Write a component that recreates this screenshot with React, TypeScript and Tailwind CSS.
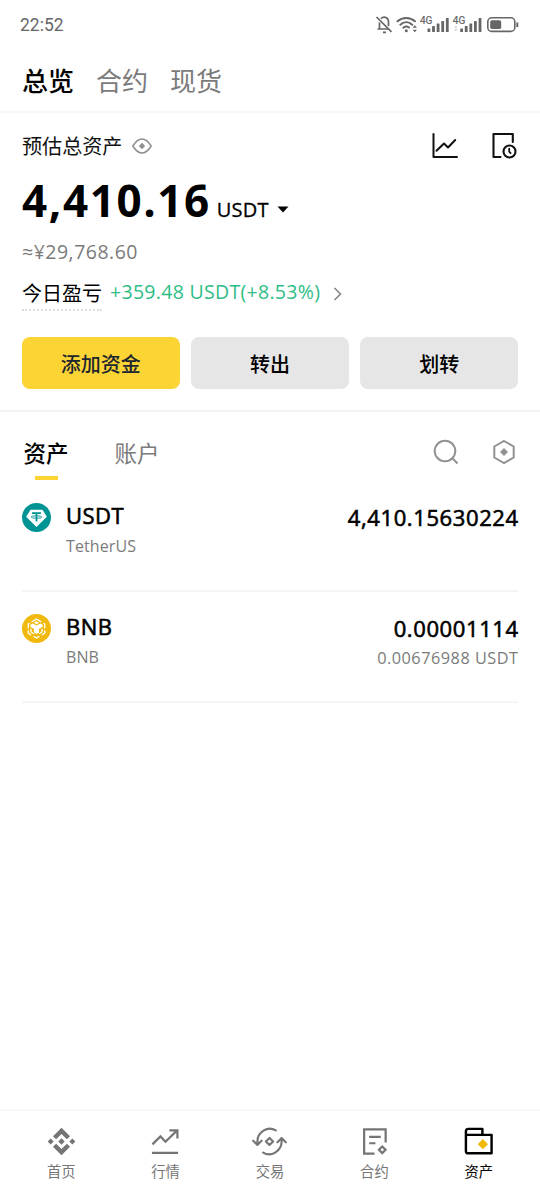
import type { ReactNode } from "react";

const latin = "font-['Open_Sans','Noto_Sans_CJK_SC',sans-serif]";
const han = "font-['Noto_Sans_CJK_SC',sans-serif]";

function Signal() {
  return (
    <g fill="#666" stroke="none">
      <rect x="0" y="10.5" width="2.8" height="3.5" rx=".6" />
      <rect x="4.6" y="8" width="2.8" height="6" rx=".6" />
      <rect x="9.2" y="5.5" width="2.8" height="8.500" rx=".6" />
      <rect x="13.8" y="3" width="2.8" height="11" rx=".6" />
      <rect x="18.4" y="0" width="2.8" height="14" rx=".6" />
    </g>
  );
}

function StatusBar() {
  return (
    <header className="flex h-[50px] items-center justify-between pl-5 text-[#666]">
      <span className="relative top-[1px] font-[Roboto,sans-serif] text-[17.5px] leading-none">22:52</span>
      <svg width="168" height="24" viewBox="372 12 168 24" fill="none" stroke="#666" strokeWidth="1.7">
        <path d="M376.500 16 391.500 30.800M377.500 28H388M379.500 28V21.5M381 17.800C383 15.300 388.300 15.300 388.500 21V25M383 31.400H386" />
        <g strokeLinecap="round" strokeWidth="2">
          <path d="M397.5 20.3C402.5 15.8 410 15.8 415 20.3M400.3 23.7C404 20.4 408.7 20.4 412.2 23.7M403.3 26.7C405.3 25.2 407 25.2 409 26.5" />
        </g>
        <circle cx="406.3" cy="29.8" r="1.5" fill="#666" stroke="none" />
        <path d="m414.800 24.200 2.200 2.500h-4.400zM414.800 31.300l-2.200-2.500h4.400z" fill="#666" stroke="none" />
        <text x="420" y="22.7" fontFamily="Roboto, sans-serif" fontSize="10" fill="#666" stroke="#666" strokeWidth=".2">4G</text>
        <text x="452.800" y="22.7" fontFamily="Roboto, sans-serif" fontSize="10" fill="#666" stroke="#666" strokeWidth=".2">4G</text>
        <g transform="translate(427.500 17)"><Signal /></g>
        <g transform="translate(460.200 17)"><Signal /></g>
        <path d="m455.8 24.7 1.6 2h-3.2zM455.8 30.2l-1.6-2h3.2z" fill="#ccc" stroke="none" />
        <rect x="487.8" y="16.800" width="27" height="13.6" rx="4" strokeWidth="1.6" />
        <rect x="490.2" y="19.2" width="11" height="8.8" rx="1.8" fill="#666" stroke="none" />
        <path d="M517.3 21.500v4.600" strokeWidth="2" />
      </svg>
    </header>
  );
}

function Overview() {
  return (
    <section className={`h-[299px] border-b-2 border-[#f3f3f3] px-[22px] ${latin}`}>
      <div className="flex h-[66px] items-center">
        <span className={`text-[20.100px] leading-none text-[#111] ${han}`}>预估总资产</span>
        <svg className="-mt-[1px] ml-[9.500px]" width="20" height="16" viewBox="0 0 20 16" fill="none" stroke="#909090" strokeWidth="1.5">
          <path d="M.8 8C3.3 4 6.5 1 10 1s6.700 3 9.200 7c-2.500 4-5.700 7-9.200 7S3.300 12 .8 8Z" />
          <path d="m10 4.800 3.200 3.200-3.200 3.200L6.800 8z" fill="#909090" stroke="none" />
        </svg>
        <svg className="mr-8 ml-auto" width="28" height="28" viewBox="0 0 28 28" fill="none" stroke="#111" strokeWidth="2" strokeLinecap="round" strokeLinejoin="round">
          <path d="M2.500 2V25H26M5.500 18.700l7.500-7.200 4 4L24.200 8" />
        </svg>
        <svg className="-mr-[1px]" width="28" height="28" viewBox="0 0 28 28" fill="none" stroke="#111" strokeWidth="2.100" strokeLinecap="round" strokeLinejoin="round">
          <path d="M9.500 25H2.500V2H21.800v8" />
          <circle cx="18.500" cy="19.500" r="6" />
          <path d="M18.200 16.700v3l1.400 1.400" strokeWidth="1.800" />
        </svg>
      </div>
      <div className="-mt-[2px] flex h-[50px] items-baseline text-black">
        <span className="text-[44px] leading-[47px] font-bold tracking-[1.600px]">4,410.16</span>
        <span className="ml-[6px] text-[20px] leading-none tracking-[0.200px] [-webkit-text-stroke:0.3px_black]">USDT</span>
        <svg className="relative -top-[4px] ml-[8px]" width="12" height="7" viewBox="0 0 12 7"><path d="M.5.500h11L6 6.500z" /></svg>
      </div>
      <div className="flex h-[50px] items-center text-[19.500px] leading-none tracking-[0.500px] text-[#7b7b7b]">≈¥29,768.60</div>
      <div className="flex h-[36px] items-start">
        <span className={`h-[34px] border-b-2 border-dotted border-[#dedede] text-[20px] leading-[32px] text-black ${han}`}>今日盈亏</span>
        <span className="ml-2 text-[19.500px] leading-[30px] tracking-[0.300px] text-[#2ebd85]">+359.48 USDT(+8.53%)</span>
        <svg className="mt-[9px] ml-[13px]" width="10" height="16" viewBox="0 0 10 16" fill="none" stroke="#8b8b8b" strokeWidth="1.700"><path d="m1.500 2 6 6-6 6" /></svg>
      </div>
      <div className={`mt-[23.500px] grid h-[52px] grid-cols-3 gap-[11.500px] text-[20px] leading-none font-medium ${han}`}>
        <button className="rounded-lg bg-[#fcd535] pt-[2px] text-[#202630]">添加资金</button>
        <button className="rounded-lg bg-[#e6e6e6] pt-[2px] text-black">转出</button>
        <button className="rounded-lg bg-[#e6e6e6] pt-[2px] text-black">划转</button>
      </div>
    </section>
  );
}

function AssetTabs() {
  return (
    <div className={`flex h-[69px] items-start pr-6 pl-[23.500px] pt-[27px] text-[22.500px] leading-[26px] ${han}`}>
      <div className="flex flex-col items-center gap-[11px]">
        <span className="font-medium text-black">资产</span>
        <span className="h-[4px] w-[23px] bg-[#fcd535]" />
      </div>
      <span className="ml-[46px] text-[#7b7b7b]">账户</span>
      <svg className="mt-[-1px] ml-auto" width="28" height="28" viewBox="0 0 28 28" fill="none" stroke="#929292" strokeWidth="2"><circle cx="13" cy="13" r="10.300" /><path d="m20.300 20.300 5.200 5.200" /></svg>
      <svg className="-mr-[2px] ml-[30px] mt-[-1px]" width="28" height="28" viewBox="0 0 28 28" fill="none" stroke="#929292" strokeWidth="2"><path d="m14 3 9.700 5.500v11L14 25l-9.700-5.500v-11z" /><path d="m14 10 4 4-4 4-4-4z" fill="#929292" stroke="none" /></svg>
    </div>
  );
}

function UsdtLogo() {
  return (
    <svg width="29" height="29" viewBox="0 0 29 29">
      <circle cx="14.500" cy="14.500" r="14.500" fill="#009393" />
      <path d="M8.500 6.700h12l4.300 7-10.300 10.300L4.200 13.700z" fill="white" />
      <path d="M10 10.200h9M14.500 10.500v8" stroke="#009393" strokeWidth="1.700" />
      <ellipse cx="14.500" cy="14" rx="5.300" ry="1.200" fill="none" stroke="#009393" strokeWidth=".9" />
    </svg>
  );
}

function BnbLogo() {
  return (
    <svg width="29" height="29" viewBox="0 0 29 29" fill="none">
      <circle cx="14.500" cy="14.500" r="14.500" fill="#f0b90b" />
      <g stroke="white" strokeWidth="1.300">
        <path d="m9.500 8 5-2.900 5 2.900M21.500 9.200l1.200.7v4.500M22.700 16.300v3l-3 1.700M17.500 22.200l-3 1.700-3-1.700M9.300 21l-3-1.700v-3M6.300 14.400V9.900l1.200-.7" />
        <path d="M9 14.800v3.200l3 1.800M20 14.800v3.200l-3 1.800" />
      </g>
      <path d="m8.300 10.800 2.400-1.400 3.800 2.200 3.800-2.200 2.400 1.400v1.900L17 14.900v3.700l-2.500 1.500-2.500-1.500v-3.700l-3.700-2.200z" fill="white" />
      <path d="m11.800 8.700 2.700-1.500 2.700 1.500-2.700 1.500z" fill="white" />
    </svg>
  );
}

type AssetProps = { logo: ReactNode; symbol: string; name: string; amount: string; value?: string };

function AssetRow({ logo, symbol, name, amount, value }: AssetProps) {
  return (
    <li className="flex h-[111px] items-start border-b-2 border-[#f5f5f5] pt-[22px]">
      {logo}
      <div className="-mt-[2px] ml-[15px] flex flex-col">
        <span className="text-[22px] leading-[28px] tracking-[0.500px] text-black [-webkit-text-stroke:0.6px_black]">{symbol}</span>
        <span className="mt-[3px] text-[16px] leading-[28px] tracking-[0.100px] text-[#7b7b7b]">{name}</span>
      </div>
      <div className="ml-auto flex flex-col items-end">
        <span className="-mr-[0.700px] text-[22px] leading-[28px] tracking-[0.600px] text-black [-webkit-text-stroke:0.6px_black]">{amount}</span>
        {value && <span className="-mr-[0.500px] mt-[2px] text-[16.300px] leading-[28px] tracking-[0.500px] text-[#7b7b7b]">{value}</span>}
      </div>
    </li>
  );
}

const navItems: { label: string; icon: ReactNode; active?: boolean }[] = [
  { label: "首页", icon: <g fill="currentColor"><path d="m16 1.700 8.800 8.800-3.300 3.300L16 8.300l-5.500 5.500-3.300-3.300zM16 30.300l-8.800-8.800 3.300-3.300 5.500 5.500 5.500-5.500 3.300 3.300z" /><path d="m16 12.700 3.300 3.300-3.300 3.300-3.300-3.300zM4.800 12.900 7.900 16l-3.100 3.100L1.700 16zM27.200 12.900l3.100 3.100-3.100 3.100-3.100-3.100z" /></g> },
  { label: "行情", icon: <g stroke="currentColor" strokeWidth="2.300" fill="none"><path d="m2.500 19 8.300-8.300 5.200 5.500L27.500 5M20 4.500h8.300V13M2 27.700h27" /></g> },
  { label: "交易", icon: <g stroke="currentColor" strokeWidth="2.200" fill="none" strokeLinecap="round" strokeLinejoin="round"><path d="M22.500 4.500C14-.5 3.500 6.500 3.500 16v3.300M-.8 15.200l4.300 4.300 4.300-4.300M9.500 27.500C18 32.500 28.500 25.500 28.500 16v-3.300M24.200 16.800l4.300-4.300 4.300 4.300M16 12.300l3.700 3.700-3.700 3.700-3.700-3.700z" /></g> },
  { label: "合约", icon: <g stroke="currentColor" strokeWidth="2.300" fill="none"><path d="M16 28.600H5.300V3.400H27.500V17M10.500 11.200h12M10.500 17.800h6.500" /><path d="m24 21.200 3.400 3.400-3.400 3.400-3.400-3.400z" /></g> },
  { label: "资产", active: true, icon: <g fill="none"><path d="M3 9.200V5.500q0-2.500 2.500-2.500h14.500v6M3 9.200h26.500v19H5.500Q3 28.200 3 25.700z" stroke="currentColor" strokeWidth="2.500" strokeLinejoin="round" /><path d="m20.500 13.500 5.300 5.300-5.300 5.300-5.300-5.300z" fill="#f0b90b" /></g> },
];

export default function App() {
  return (
    <main className="flex h-[1200px] w-[540px] flex-col overflow-hidden bg-white">
      <StatusBar />
      <nav className={`flex h-[63px] items-center gap-[22px] border-b-2 border-[#f6f6f6] px-[22px] pb-[2px] text-[26px] leading-none text-[#7b7b7b] ${han}`}>
        <span className="font-medium text-black">总览</span>
        <span>合约</span>
        <span>现货</span>
      </nav>
      <Overview />
      <AssetTabs />
      <ul className={`flex-1 px-[22px] ${latin}`}>
        <AssetRow logo={<UsdtLogo />} symbol="USDT" name="TetherUS" amount="4,410.15630224" />
        <AssetRow logo={<BnbLogo />} symbol="BNB" name="BNB" amount="0.00001114" value="0.00676988 USDT" />
      </ul>
      <footer className={`grid h-[91px] grid-cols-5 border-t-2 border-[#f8f8f8] px-[9px] pt-[14.500px] text-[14.300px] leading-none ${han}`}>
        {navItems.map(({ label, icon, active }) => (
          <button key={label} className={active ? "flex flex-col items-center gap-[7px] text-black" : "flex flex-col items-center gap-[7px] text-[#757575]"}>
            <svg className="h-[31px] w-[31px] overflow-visible" viewBox="0 0 32 32">{icon}</svg>
            <span>{label}</span>
          </button>
        ))}
      </footer>
    </main>
  );
}
